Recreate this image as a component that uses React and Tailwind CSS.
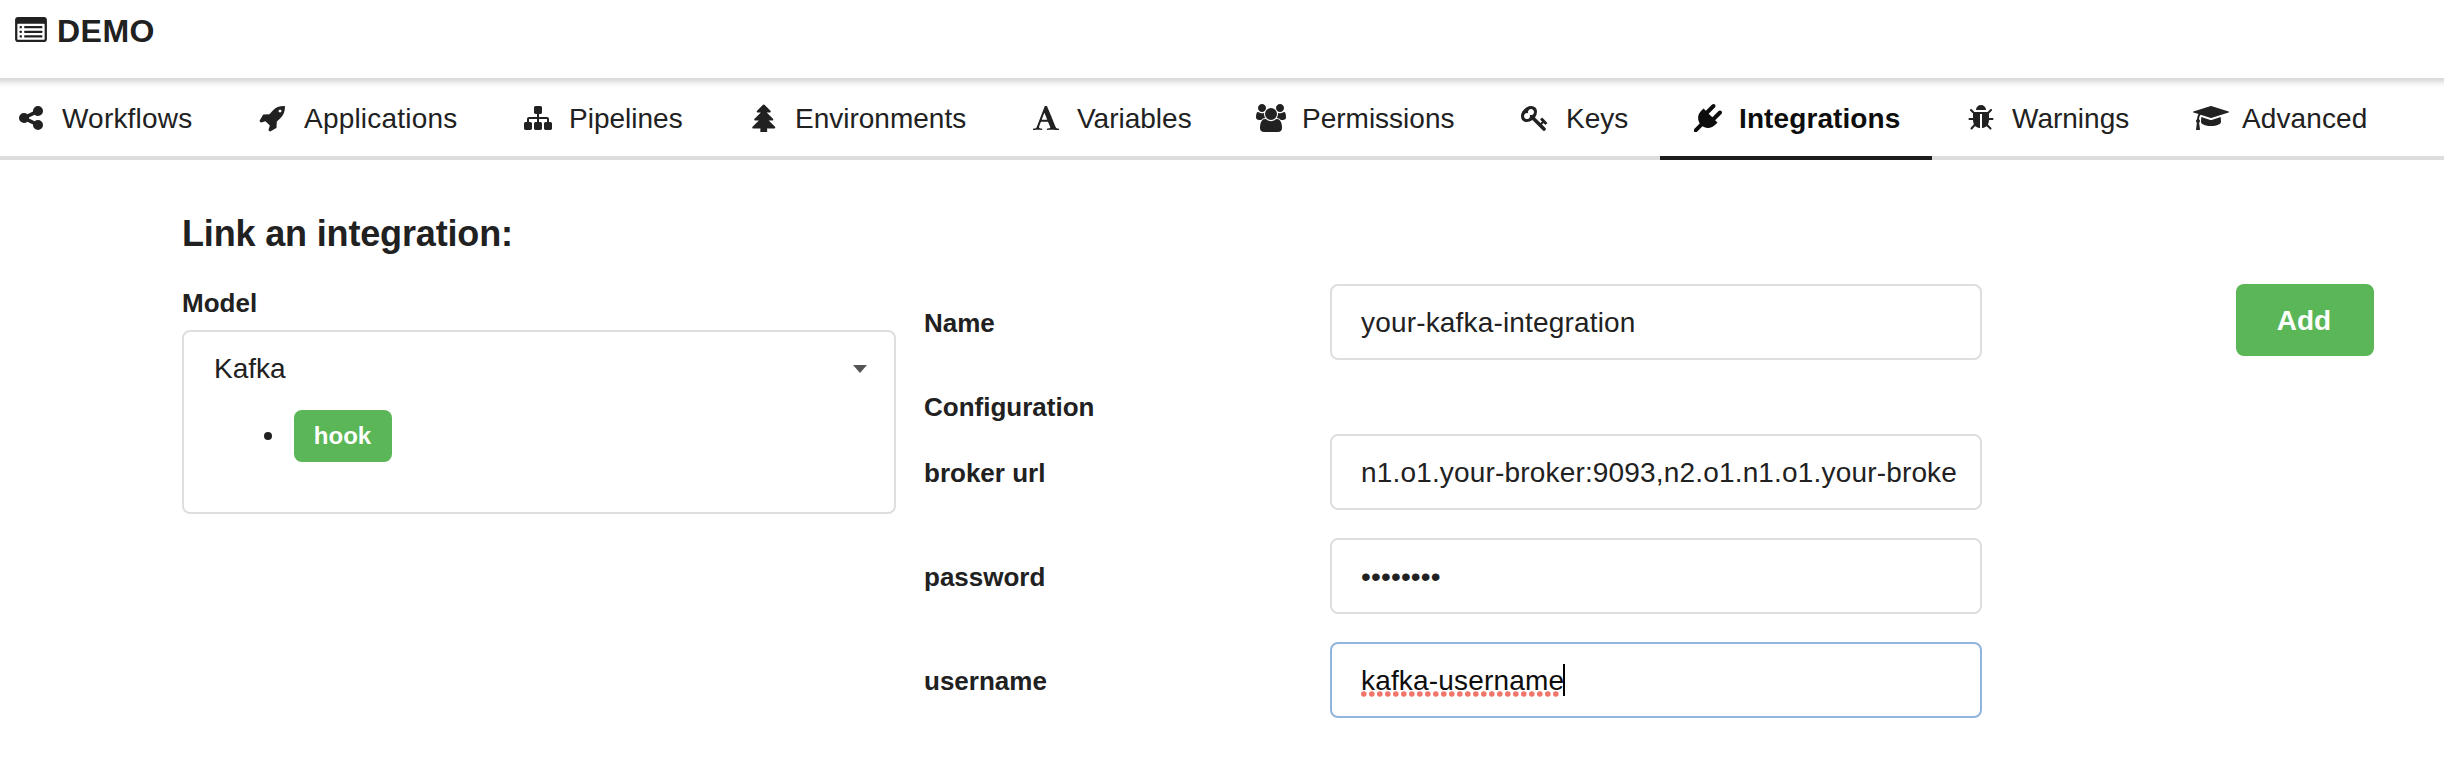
const ICONS = {
  share:
    "M1344 1024q133 0 226.5 93.5t93.5 226.5-93.5 226.5-226.5 93.5-226.5-93.5-93.5-226.5q0-12 2-34l-360-180q-92 86-218 86-133 0-226.5-93.5t-93.5-226.5 93.5-226.5 226.5-93.5q126 0 218 86l360-180q-2-22-2-34 0-133 93.5-226.5t226.5-93.5 226.5 93.5 93.5 226.5-93.5 226.5-226.5 93.5q-126 0-218-86l-360 180q2 22 2 34t-2 34l360 180q92-86 218-86z",
  rocket:
    "M1440 448q0-40-28-68t-68-28-68 28-28 68 28 68 68 28 68-28 28-68zm224-288q0 249-75.5 430.5t-253.5 360.5q-81 80-195 176l-20 379q-2 16-16 26l-384 224q-7 4-16 4-12 0-23-9l-64-64q-13-14-8-32l85-276-281-281-276 85q-3 1-9 1-14 0-23-9l-64-64q-17-19-5-39l224-384q10-14 26-16l379-20q96-114 176-195 188-187 358-258t431-71q14 0 24 9.5t10 22.5z",
  sitemap:
    "M1792 1248v320q0 40-28 68t-68 28h-320q-40 0-68-28t-28-68v-320q0-40 28-68t68-28h96v-192h-512v192h96q40 0 68 28t28 68v320q0 40-28 68t-68 28h-320q-40 0-68-28t-28-68v-320q0-40 28-68t68-28h96v-192h-512v192h96q40 0 68 28t28 68v320q0 40-28 68t-68 28h-320q-40 0-68-28t-28-68v-320q0-40 28-68t68-28h96v-192q0-52 38-90t90-38h512v-192h-96q-40 0-68-28t-28-68v-320q0-40 28-68t68-28h320q40 0 68 28t28 68v320q0 40-28 68t-68 28h-96v192h512q52 0 90 38t38 90v192h96q40 0 68 28t28 68z",
  tree:
    "M1616 1504q0 26-19 45t-45 19h-462q1 17 6 87.5t5 108.5q0 25-18 42.5t-43 17.5h-320q-25 0-43-17.5t-18-42.5q0-38 5-108.5t6-87.5h-462q-26 0-45-19t-19-45 19-45l402-403h-229q-26 0-45-19t-19-45 19-45l402-403h-197q-26 0-45-19t-19-45 19-45l384-384q19-19 45-19t45 19l384 384q19 19 19 45t-19 45-45 19h-197l402 403q19 19 19 45t-19 45-45 19h-229l402 403q19 19 19 45z",
  font:
    "M789 559l-170 450q33 0 136.5 2t160.5 2q19 0 57-2-87-253-184-452zm-725 1105l2-79q23-7 56-12.5t57-10.5 49.5-14.5 44.5-29 31-50.5l237-616 280-724h128q8 14 11 21l205 480q33 78 106 257.5t114 274.5q15 34 58 144.5t72 168.5q20 45 35 57 19 15 88 29.5t84 20.5q6 38 6 57 0 5-.5 13.5t-.5 12.5q-63 0-190-8t-191-8q-76 0-215 7t-178 8q0-43 4-78l131-28q1 0 12.5-2.5t15.5-3.5 14.5-4.5 15-6.5 11-8 9-11 2.5-14q0-16-31-96.5t-72-177.5-42-100l-450-2q-26 58-76.5 195.5t-50.5 162.5q0 22 14 37.5t43.5 24.5 48.5 13.5 57 8.5 41 4q1 19 1 58 0 9-2 27-58 0-174.5-10t-174.5-10q-8 0-26.5 4t-21.5 4q-80 14-188 14z",
  users:
    "M529 896q-162 5-265 128h-134q-82 0-138-40.5t-56-118.5q0-353 124-353 6 0 43.5 21t97.5 42.5 119 21.5q67 0 133-23-5 37-5 66 0 139 81 256zm1071 637q0 120-73 189.5t-194 69.5h-874q-121 0-194-69.5t-73-189.5q0-53 3.5-103.5t14-109 26.5-108.5 43-97.5 62-81 85.5-53.5 111.5-20q10 0 43 21.5t73 48 107 48 135 21.5 135-21.5 107-48 73-48 43-21.5q61 0 111.5 20t85.5 53.5 62 81 43 97.5 26.5 108.5 14 109 3.5 103.5zm-1024-1277q0 106-75 181t-181 75-181-75-75-181 75-181 181-75 181 75 75 181zm704 384q0 159-112.5 271.5t-271.5 112.5-271.5-112.5-112.5-271.5 112.5-271.5 271.5-112.5 271.5 112.5 112.5 271.5zm576 225q0 78-56 118.5t-138 40.5h-134q-103-123-265-128 81-117 81-256 0-29-5-66 66 23 133 23 59 0 119-21.5t97.5-42.5 43.5-21q124 0 124 353zm-128-609q0 106-75 181t-181 75-181-75-75-181 75-181 181-75 181 75 75 181z",
  key:
    "M832 512q0-80-56-136t-136-56-136 56-56 136q0 42 19 83-41-19-83-19-80 0-136 56t-56 136 56 136 136 56 136-56 56-136q0-42-19-83 41 19 83 19 80 0 136-56t56-136zm851 704q0 17-49 66t-66 49q-9 0-28.5-16t-36.5-33-38.5-40-24.5-26l-96 96 220 220q28 28 28 68 0 42-39 81t-81 39q-40 0-68-28l-671-671q-176 131-365 131-163 0-265.5-102.5t-102.5-265.5q0-160 95-313t248-248 313-95q163 0 265.5 102.5t102.5 265.5q0 189-131 365l355 355 96-96q-3-3-26-24.5t-40-38.5-33-36.5-16-28.5q0-17 49-66t66-49q13 0 23 10 6 6 46 44.5t82 79.5 86.5 86 73 78 28.5 41z",
  plug:
    "M1755 453q37 38 37 90.5t-37 90.5l-401 400 150 150-160 160q-163 163-389.5 186.5t-411.5-100.5l-362 362h-181v-181l362-362q-124-185-100.5-411.5t186.5-389.5l160-160 150 150 400-401q38-37 91-37t90 37 37 90.5-37 90.5l-400 401 234 234 401-400q38-37 91-37t90 37z",
  bug:
    "M1696 960q0 26-19 45t-45 19h-224q0 171-67 290l208 209q19 19 19 45t-19 45q-18 19-45 19t-45-19l-198-197q-5 5-15 13t-42 28.5-65 36.5-82 29-97 13v-896h-128v896q-51 0-101.5-13.5t-87-33-66-39-43.5-32.5l-15-14-183 207q-20 21-48 21-24 0-43-16-19-18-20.5-44.5t15.5-46.5l202-227q-58-114-58-274h-224q-26 0-45-19t-19-45 19-45 45-19h224v-294l-173-173q-19-19-19-45t19-45 45-19 45 19l173 173h844l173-173q19-19 45-19t45 19 19 45-19 45l-173 173v294h224q26 0 45 19t19 45zm-480-576h-640q0-133 93.5-226.5t226.5-93.5 226.5 93.5 93.5 226.5z",
  cap:
    "M1774 836l18 316q4 69-82 128t-235 93.5-323 34.5-323-34.5-235-93.5-82-128l18-316 574 181q22 7 48 7t48-7zm530-324q0 23-22 31l-1120 352q-4 1-10 1t-10-1l-652-206q-43 34-71 111.5t-34 178.5q63 36 63 109 0 69-58 107l58 433q2 14-8 25-9 11-24 11h-192q-15 0-24-11-10-11-8-25l58-433q-58-38-58-107 0-73 65-111 11-207 98-330l-333-104q-22-8-22-31t22-31l1120-352q4-1 10-1t10 1l1120 352q22 8 22 31z",
};

const TABS = [
  { label: "Workflows", icon: "share", width: "w-[225px] pl-[14px] tracking-[0.2px]" },
  { label: "Applications", icon: "rocket", width: "w-[265px] pl-[31px] tracking-[0.2px]" },
  { label: "Pipelines", icon: "sitemap", width: "w-[226px] pl-[31px]" },
  { label: "Environments", icon: "tree", width: "w-[282px] pl-[31px]" },
  { label: "Variables", icon: "font", width: "w-[225px] pl-[31px]" },
  { label: "Permissions", icon: "users", box: "-64 0 1920 1792", size: "w-[30px]", width: "w-[264px] pl-[31px]" },
  { label: "Keys", icon: "key", width: "w-[173px] pl-[31px]" },
  { label: "Integrations", icon: "plug", active: true, width: "w-[272px] pl-[31px] tracking-[0.1px]" },
  { label: "Warnings", icon: "bug", width: "ml-[2px] w-[228px] pl-[30px]" },
  { label: "Advanced", icon: "cap", box: "0 0 2304 1792", size: "w-9", width: "w-[282px] pl-8 tracking-[0.1px]" },
];

function Tab({ label, icon, box, size, width, active }) {
  return (
    <a
      className={`-mb-1 flex h-[82px] shrink-0 items-center gap-[15px] border-b-4 pt-[3px] ${width} ${
        active ? "border-[#1b1c1d] font-bold text-[#0d0d0d]" : "border-transparent"
      }`}
    >
      <span className="-mt-px flex w-[33px] shrink-0 justify-center">
        <svg viewBox={box || "0 0 1792 1792"} className={`h-7 shrink-0 fill-current ${size || "w-7"}`}>
          <path d={ICONS[icon]} />
        </svg>
      </span>
      {label}
    </a>
  );
}

function ListIcon() {
  return (
    <svg viewBox="0 0 1792 1408" className="h-[25px] w-8 fill-current">
      <path
        fillRule="evenodd"
        d="M1792 160v1088q0 66-47 113t-113 47H160q-66 0-113-47T0 1248V160Q0 94 47 47T160 0h1472q66 0 113 47t47 113zM1664 1248V416q0-13-9.5-22.5T1632 384H160q-13 0-22.5 9.5T128 416v832q0 13 9.5 22.5t22.5 9.5h1472q13 0 22.5-9.5t9.5-22.5z"
      />
      {[512, 768, 1024].map((y) => (
        <g key={y}>
          <rect x="256" y={y} width="128" height="128" rx="32" />
          <rect x="512" y={y} width="1024" height="128" rx="32" />
        </g>
      ))}
    </svg>
  );
}

function Field({ label, children, focused }) {
  return (
    <div className="flex h-[76px] items-center">
      <label className="w-[406px] shrink-0 pt-px text-[26px] font-bold">{label}</label>
      <div
        className={`flex h-full w-[652px] items-center rounded-lg border-2 pt-0.5 pr-[27px] pl-[29px] tracking-[0.17px] ${
          focused ? "border-[#8fb6da] text-[#0d0d0d]" : "border-[#dededf]"
        }`}
      >
        <div className="w-full whitespace-nowrap">{children}</div>
      </div>
    </div>
  );
}

function SpellingMark() {
  return (
    <svg className="absolute top-[28px] left-0 h-[6px] w-[200px]" viewBox="0 0 200 6">
      {Array.from({ length: 25 }, (_, i) => (
        <circle key={i} cx={2.8 + i * 8} cy="3" r="2.8" fill="#f0756b" />
      ))}
    </svg>
  );
}

export default function App() {
  return (
    <div className="h-[772px] w-full overflow-hidden bg-white font-['Liberation_Sans',Arial,sans-serif] text-[28px] leading-9 text-[#212121]">
      <header className="flex h-[78px] items-start gap-[10px] pt-[13px] pl-[15px] text-[32px] font-bold tracking-[0.5px]">
        <span className="pt-1">
          <ListIcon />
        </span>
        DEMO
      </header>
      <nav className="flex h-[82px] border-b-4 border-[#dddddd] bg-[linear-gradient(#d9d9d9_0px,#dddddd_2px,#f0f0f0_5px,#ffffff_9px)]">
        {TABS.map((tab) => (
          <Tab key={tab.label} {...tab} />
        ))}
      </nav>
      <main className="pt-[54px] pl-[182px]">
        <h1 className="h-[70px] text-[36px] leading-[40px] font-bold tracking-[-0.16px]">Link an integration:</h1>
        <div className="flex items-start">
          <section className="w-[714px]">
            <h2 className="h-[46px] pt-px text-[26px] font-bold">Model</h2>
            <div className="h-[184px] rounded-lg border-2 border-[#dededf]">
              <div className="flex h-[74px] items-center justify-between pr-[27px] pl-[30px]">
                Kafka
                <svg viewBox="0 0 14 8" className="h-2 w-3.5 fill-[#555555]">
                  <path d="M0 0h14L7 8z" />
                </svg>
              </div>
              <ul>
                <li className="flex h-[60px] items-center gap-[22px] pl-20">
                  <span className="size-2 rounded-full bg-[#212121]" />
                  <span className="flex h-[52px] w-[98px] items-center justify-center rounded-lg bg-[#5ab656] pr-px text-2xl font-bold text-white">
                    hook
                  </span>
                </li>
              </ul>
            </div>
          </section>
          <section className="ml-7 w-[1058px]">
            <Field label="Name">your-kafka-integration</Field>
            <h2 className="h-[74px] pt-[29px] text-[26px] font-bold">Configuration</h2>
            <div className="flex flex-col gap-7">
              <Field label="broker url">n1.o1.your-broker:9093,n2.o1.n1.o1.your-broke</Field>
              <Field label="password">••••••••</Field>
              <Field label="username" focused>
                <span className="relative inline-block">
                  kafka-username
                  <SpellingMark />
                  <span className="absolute top-px right-[-1px] h-8 w-0.5 bg-black" />
                </span>
              </Field>
            </div>
          </section>
          <button className="ml-[254px] h-[72px] w-[138px] rounded-lg bg-[#5ab656] pt-px pr-[2px] font-bold text-white">
            Add
          </button>
        </div>
      </main>
    </div>
  );
}
